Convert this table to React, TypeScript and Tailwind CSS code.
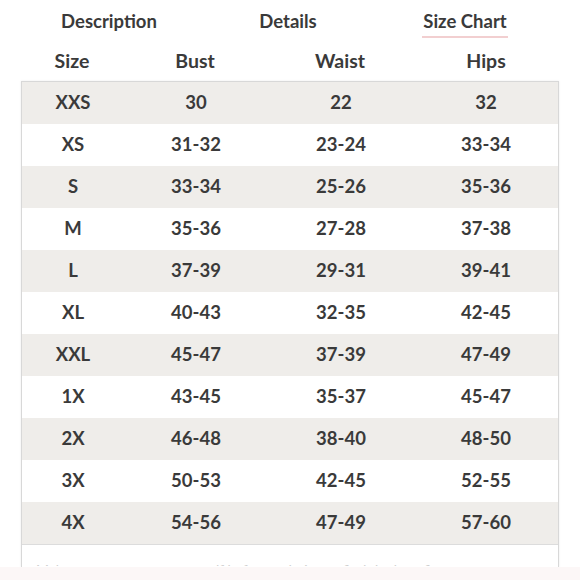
import React from 'react';

interface SizeRow {
    size: string;
    bust: string;
    waist: string;
    hips: string;
}

const rows: SizeRow[] = [
    { size: 'XXS', bust: '30', waist: '22', hips: '32' },
    { size: 'XS', bust: '31-32', waist: '23-24', hips: '33-34' },
    { size: 'S', bust: '33-34', waist: '25-26', hips: '35-36' },
    { size: 'M', bust: '35-36', waist: '27-28', hips: '37-38' },
    { size: 'L', bust: '37-39', waist: '29-31', hips: '39-41' },
    { size: 'XL', bust: '40-43', waist: '32-35', hips: '42-45' },
    { size: 'XXL', bust: '45-47', waist: '37-39', hips: '47-49' },
    { size: '1X', bust: '43-45', waist: '35-37', hips: '45-47' },
    { size: '2X', bust: '46-48', waist: '38-40', hips: '48-50' },
    { size: '3X', bust: '50-53', waist: '42-45', hips: '52-55' },
    { size: '4X', bust: '54-56', waist: '47-49', hips: '57-60' },
];

const cols = 'grid grid-cols-[102px_144px_146px_1fr] items-center text-center';

const App: React.FC = () => {
    return (
        <div className="w-[580px] h-[580px] bg-white overflow-hidden flex flex-col font-['Lato','Liberation_Sans',sans-serif] text-[#3a3a3a]">
            {/* tabs */}
            <div className="flex h-[42px] items-start pt-[10px] text-[18.5px] font-bold leading-[22px]">
                <div className="w-[218px] text-center">Description</div>
                <div className="w-[140px] text-center">Details</div>
                <div className="w-[214px] flex justify-center">
                    <span className="block border-b-2 border-[#f2cfd0] px-[1px] pb-[4px]">Size Chart</span>
                </div>
            </div>

            {/* column headings */}
            <div className={`${cols} ml-[21px] w-[538px] h-[39px] text-[19.5px] font-bold pb-[2px]`}>
                <div>Size</div>
                <div>Bust</div>
                <div>Waist</div>
                <div>Hips</div>
            </div>

            {/* table */}
            <div className="ml-[21px] w-[538px] h-[486px] border border-b-0 border-[#d8d8d8] shadow-[0_0_2px_rgba(0,0,0,0.08)] overflow-hidden flex flex-col">
                {rows.map((row, i) => (
                    <div
                        key={row.size}
                        className={`${cols} h-[42px] shrink-0 text-[18.5px] font-bold ${i % 2 === 0 ? 'bg-[#efedea]' : 'bg-white'}`}
                    >
                        <div>{row.size}</div>
                        <div>{row.bust}</div>
                        <div>{row.waist}</div>
                        <div>{row.hips}</div>
                    </div>
                ))}
                <div className="border-t border-[#dcdcdc] h-[22px] shrink-0 overflow-hidden">
                    <p className="pt-[15px] pl-[14px] text-[14px] leading-[20px] text-[#cfcfcf] whitespace-nowrap">
                        Make sure to measure yourself before ordering to find the best fit
                    </p>
                </div>
            </div>

            <div className="flex-1 bg-[#fcf7f7]" />
        </div>
    );
};

export default App;
